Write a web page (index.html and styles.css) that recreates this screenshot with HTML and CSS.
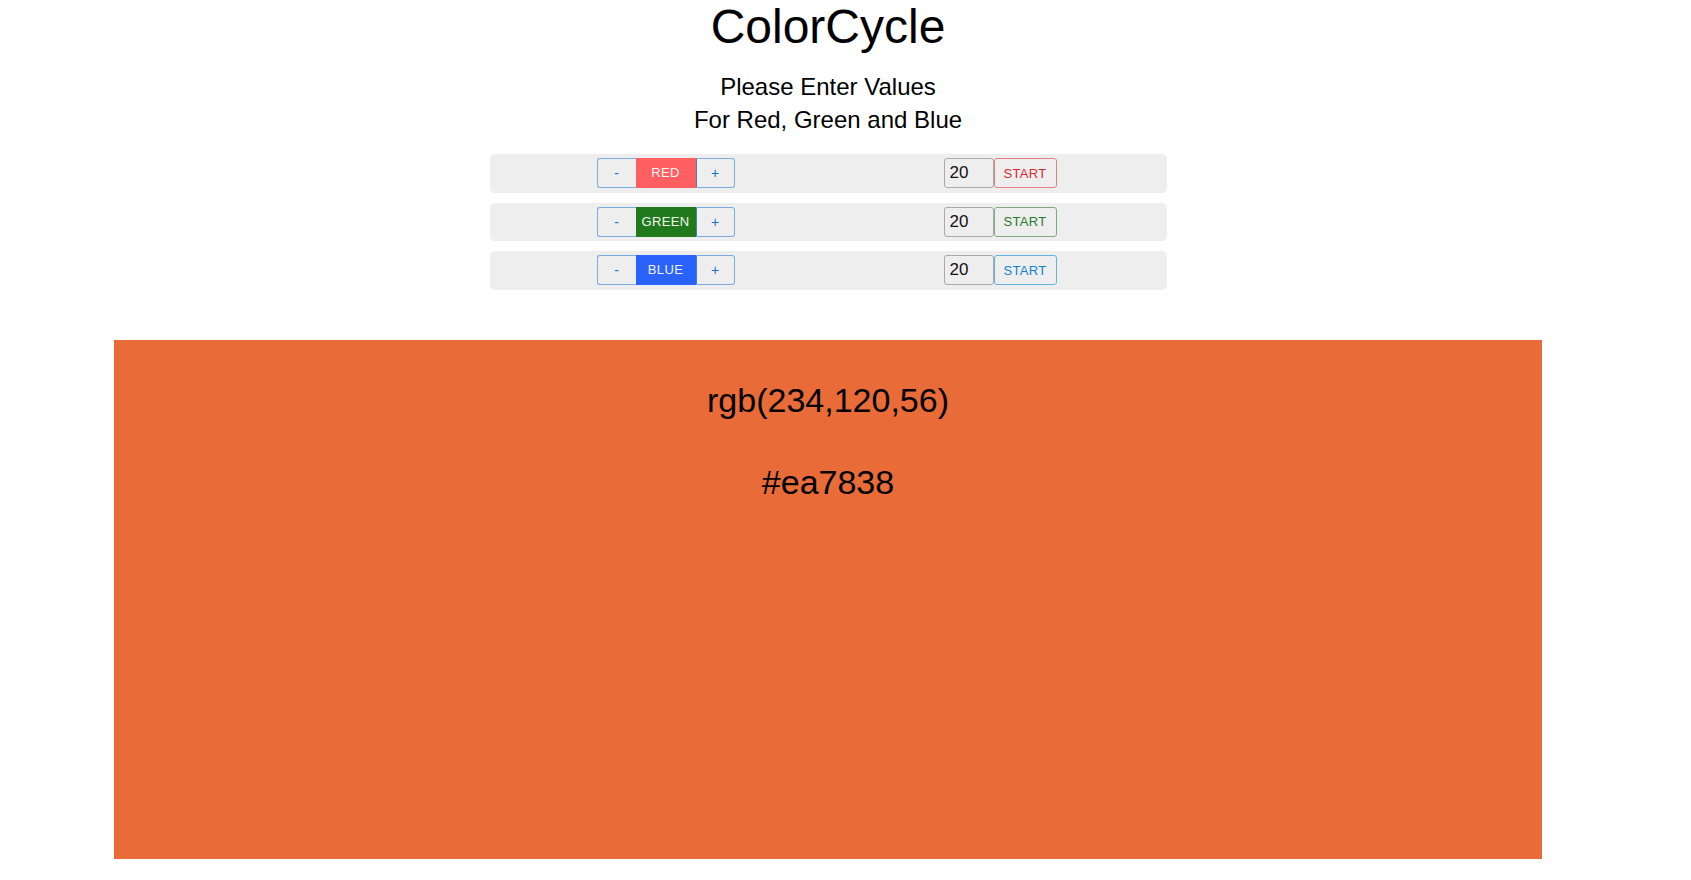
FILE: index.html
```html
<!DOCTYPE html>
<html>
<head>
<meta charset="utf-8">
<title>ColorCycle</title>
<link rel="stylesheet" href="styles.css">
</head>
<body>
<div class="page">
  <h1 class="title">ColorCycle</h1>
  <p class="subtitle">Please Enter Values<br>For Red, Green and Blue</p>
  <div class="rows">
    <div class="row">
      <div class="grp">
        <button class="pm minus">-</button>
        <span class="lbl red">RED</span>
        <button class="pm plus">+</button>
      </div>
      <div class="ctl">
        <input class="num" type="text" value="20">
        <button class="start start-red">START</button>
      </div>
    </div>
    <div class="row">
      <div class="grp">
        <button class="pm minus">-</button>
        <span class="lbl green">GREEN</span>
        <button class="pm plus">+</button>
      </div>
      <div class="ctl">
        <input class="num" type="text" value="20">
        <button class="start start-green">START</button>
      </div>
    </div>
    <div class="row">
      <div class="grp">
        <button class="pm minus">-</button>
        <span class="lbl blue">BLUE</span>
        <button class="pm plus">+</button>
      </div>
      <div class="ctl">
        <input class="num" type="text" value="20">
        <button class="start start-blue">START</button>
      </div>
    </div>
  </div>
  <div class="swatch">
    <p class="val">rgb(234,120,56)</p>
    <p class="val hex">#ea7838</p>
  </div>
</div>
</body>
</html>
```
FILE: styles.css
```css
html, body {
  margin: 0;
  padding: 0;
  background: #ffffff;
}
body {
  font-family: "Liberation Sans", Arial, Helvetica, sans-serif;
  color: #000;
}
.page {
  width: 1656px;
  text-align: center;
}
.title {
  margin: 0;
  font-size: 48px;
  line-height: 54px;
  font-weight: normal;
}
.subtitle {
  margin: 16px 0 0;
  font-size: 24px;
  line-height: 33px;
}
.rows {
  margin: 18px auto 0;
  width: 677px;
  display: flex;
  flex-direction: column;
  gap: 10px;
}
.row {
  height: 38.5px;
  background: #eeeeee;
  border-radius: 5px;
  display: flex;
  justify-content: space-between;
  align-items: center;
  padding: 0 110px 0 107px;
}
.grp {
  display: flex;
  height: 30px;
}
.pm {
  box-sizing: border-box;
  width: 39px;
  height: 30px;
  margin: 0;
  padding: 0;
  background: transparent;
  border: 1px solid #7aaee0;
  color: #1a6fcf;
  font-family: "Liberation Sans", Arial, sans-serif;
  font-size: 14px;
}
.minus {
  border-right: none;
  border-radius: 3px 0 0 3px;
}
.plus {
  border-left-color: #3f7ec8;
  border-radius: 0 3px 3px 0;
}
.lbl {
  width: 60px;
  height: 30px;
  line-height: 30px;
  font-size: 13px;
  color: #f4f4f4;
  letter-spacing: 0.4px;
}
.red { background: #ff5f61; }
.green { background: #207a1c; }
.blue { background: #2a62fc; }
.ctl {
  display: flex;
  height: 30px;
}
.num {
  box-sizing: border-box;
  width: 50px;
  height: 30px;
  margin: 0;
  padding: 0 0 0 5px;
  border: 1px solid #aaaaaa;
  border-radius: 3px;
  background: transparent;
  font-family: "Liberation Sans", Arial, sans-serif;
  font-size: 17px;
  color: #111;
}
.start {
  box-sizing: border-box;
  width: 63px;
  height: 30px;
  margin: 0;
  padding: 0;
  background: transparent;
  border: 1px solid;
  border-radius: 3px;
  font-family: "Liberation Sans", Arial, sans-serif;
  font-size: 13px;
  letter-spacing: 0.3px;
}
.start-red { color: #d42a2f; border-color: #e57f80; }
.start-green { color: #2a7a2c; border-color: #7eac80; }
.start-blue { color: #0e84cc; border-color: #62b2e2; }
.swatch {
  box-sizing: border-box;
  margin: 50px auto 0;
  width: 1428px;
  height: 519px;
  background: #e96b38;
  padding-top: 41px;
}
.val {
  margin: 0;
  font-size: 34px;
  line-height: 38px;
}
.hex {
  margin-top: 44px;
}
```
